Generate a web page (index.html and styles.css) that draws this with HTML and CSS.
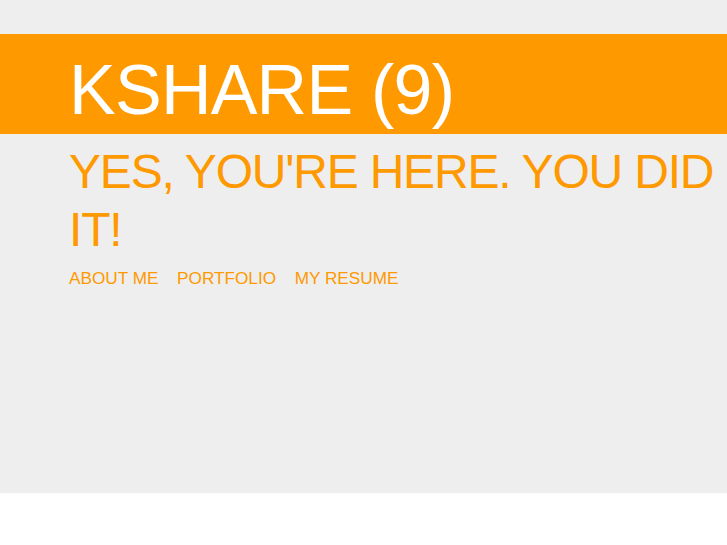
FILE: index.html
```html
<!DOCTYPE html>
<html lang="en">
<head>
<meta charset="utf-8">
<title>KSHARE (9)</title>
<link rel="stylesheet" href="styles.css">
</head>
<body>
<div class="page">
  <header class="banner">
    <h1 class="title">KSHARE (9)</h1>
  </header>
  <main class="content">
    <h2 class="tagline">YES, YOU'RE HERE. YOU DID IT!</h2>
    <nav class="nav">
      <a href="#" class="nav-link">ABOUT ME</a>
      <a href="#" class="nav-link">PORTFOLIO</a>
      <a href="#" class="nav-link">MY RESUME</a>
    </nav>
  </main>
</div>
</body>
</html>
```
FILE: styles.css
```css
html, body {
  margin: 0;
  padding: 0;
  background: #ffffff;
}
body {
  font-family: "Liberation Sans", Arial, sans-serif;
}
.page {
  background: #eeeeee;
  min-height: 493px;
  padding-top: 34px;
  box-sizing: border-box;
}
.banner {
  background: #ff9900;
  height: 100px;
  box-sizing: border-box;
  padding: 16px 0 4px 69px;
}
.title {
  margin: 0;
  color: #ffffff;
  font-weight: normal;
  font-size: 70px;
  line-height: 80px;
  letter-spacing: -0.75px;
  white-space: nowrap;
}
.content {
  padding-left: 69px;
}
.tagline {
  margin: 9px 0 0;
  color: #ff9900;
  font-weight: normal;
  font-size: 48px;
  line-height: 58px;
  letter-spacing: -1.2px;
}
.nav {
  display: flex;
  gap: 18.6px;
  margin-top: 9px;
}
.nav-link {
  color: #ff9900;
  text-decoration: none;
  font-size: 17.2px;
}
```
